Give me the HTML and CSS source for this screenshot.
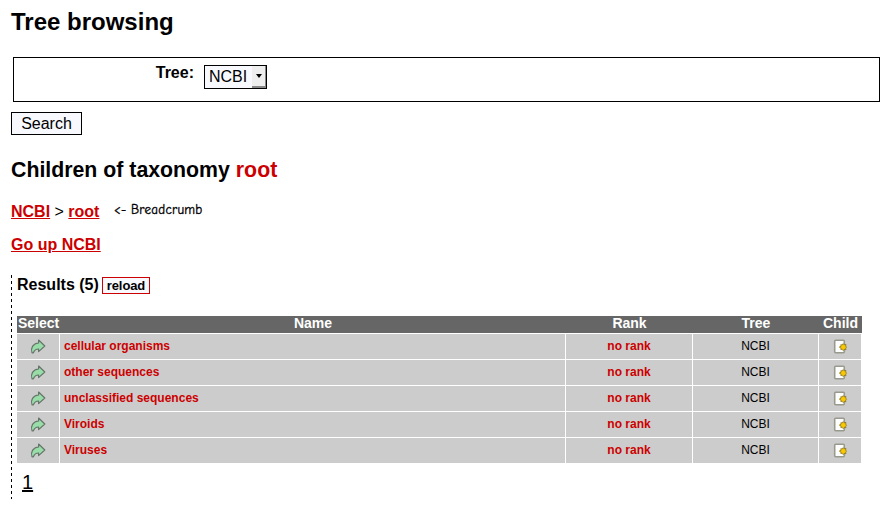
FILE: index.html
```html
<!DOCTYPE html>
<html lang="en">
<head>
<meta charset="utf-8">
<title>Tree browsing</title>
<link rel="stylesheet" href="styles.css">
</head>
<body>
<svg class="defs" aria-hidden="true">
  <symbol id="arrow" viewBox="0 0 16 16">
    <path d="M8.6 2 14.8 8 8.6 13.6V11C6.2 10.9 4.6 11.8 3.4 14.8H2C1.2 12.6 1.3 10.4 2.5 8.4 3.8 6.2 5.8 5.2 8.6 5Z" fill="#98dda8" stroke="#66756a" stroke-width="1.2" stroke-linejoin="round"/>
  </symbol>
  <symbol id="child" viewBox="0 0 16 16">
    <rect x="2.7" y="2.2" width="9.6" height="12.6" rx="1" fill="#fff" stroke="#999a8e" stroke-width="1.6"/>
    <path d="m11.2 5.6 1 1.3 1.8-.5-.4 1.7 1 1-1 1 .4 1.7-1.8-.5-1 1.3-1-1.3-1.4.2.3-1.5-1.8-.9 1.8-.9-.3-1.5 1.4.2Z" fill="#f8c800" stroke="#8e741c" stroke-width=".8"/>
  </symbol>
</svg>
<h1>Tree browsing</h1>
<form>
  <div class="fields">
    <label for="tree">Tree:</label>
    <button type="button" class="select" id="tree"><span>NCBI</span><i class="drop"></i></button>
  </div>
  <button type="button" class="search">Search</button>
</form>
<h2>Children of taxonomy <span class="red">root</span></h2>
<p class="crumbs"><span class="path"><a href="#">NCBI</a> &gt; <a href="#">root</a></span><span class="note">&lt;- Breadcrumb</span></p>
<p class="up"><a href="#">Go up NCBI</a></p>
<section class="results">
  <div class="bar"><h3>Results (5)</h3><button type="button" class="reload">reload</button></div>
  <div class="row head"><div>Select</div><div>Name</div><div>Rank</div><div>Tree</div><div>Child</div></div>
  <div class="row"><div><svg><use href="#arrow"/></svg></div><div class="name">cellular organisms</div><div class="rank">no rank</div><div>NCBI</div><div><svg><use href="#child"/></svg></div></div>
  <div class="row"><div><svg><use href="#arrow"/></svg></div><div class="name">other sequences</div><div class="rank">no rank</div><div>NCBI</div><div><svg><use href="#child"/></svg></div></div>
  <div class="row"><div><svg><use href="#arrow"/></svg></div><div class="name">unclassified sequences</div><div class="rank">no rank</div><div>NCBI</div><div><svg><use href="#child"/></svg></div></div>
  <div class="row"><div><svg><use href="#arrow"/></svg></div><div class="name">Viroids</div><div class="rank">no rank</div><div>NCBI</div><div><svg><use href="#child"/></svg></div></div>
  <div class="row"><div><svg><use href="#arrow"/></svg></div><div class="name">Viruses</div><div class="rank">no rank</div><div>NCBI</div><div><svg><use href="#child"/></svg></div></div>
  <div class="pager"><a href="#">1</a></div>
</section>
</body>
</html>
```
FILE: styles.css
```css
* { box-sizing: border-box; }
body { margin: 0; padding: 8px 7px 0 11px; background: #fff; color: #000; font: 16px/20px "Liberation Sans", Arial, sans-serif; }
.defs { display: none; }
h1, h2, h3, p { margin: 0; }
h1 { height: 49px; font-size: 24px; line-height: 28px; }
button { margin: 0; padding: 0; border: 1px solid #000; border-radius: 0; background: #f8f8ff; color: #000; font: inherit; }
.fields { display: flex; align-items: flex-start; height: 45px; margin-left: 2px; padding-top: 7px; border: 1px solid #000; }
.fields label { width: 180px; margin-right: 10px; line-height: 16px; font-weight: bold; text-align: right; }
.select { display: flex; justify-content: space-between; width: 63px; height: 24px; padding-left: 4px; line-height: 22px; }
.drop { display: flex; align-items: center; justify-content: center; width: 14px; height: 22px; background: #eee; border: solid #888; border-width: 0 1px 2px 0; }
.drop::after { content: ""; border: solid transparent; border-width: 4px 3px 0; border-top-color: #000; }
.search { display: block; width: 71px; height: 23px; margin-top: 10px; line-height: 21px; }
h2 { margin-top: 22px; height: 45px; font-size: 21.3px; line-height: 26px; }
.red, a { color: #c00; }
.crumbs { display: flex; height: 33px; }
.crumbs a, .up a { font-weight: bold; }
.path { width: 103px; white-space: nowrap; }
.note { font: 13px/16px "Comic Sans MS", "Comic Neue", Lato, sans-serif; letter-spacing: 0.27px; -webkit-text-stroke: 0.35px #000; }
.up { height: 40px; }
.results { position: relative; width: 852px; height: 224px; padding-left: 6px; }
.results::before { content: ""; position: absolute; left: 0; top: 0; width: 1px; height: 100%; background: repeating-linear-gradient(#000 0 3px, transparent 3px 6px); }
.bar { display: flex; height: 41px; }
.bar h3 { width: 85px; font-size: 16px; line-height: 20px; white-space: nowrap; }
.reload { width: 48px; height: 17px; margin-top: 2px; border-color: #c00; font-size: 13px; line-height: 15px; font-weight: bold; letter-spacing: -0.1px; }
.row { display: grid; grid-template-columns: 42px 505px 126px 125px 42px; column-gap: 1px; width: 845px; height: 25px; margin-bottom: 1px; font-size: 12px; line-height: 24px; text-align: center; }
.row > div { background: #ccc; }
.row svg { display: block; width: 16px; height: 16px; margin: 4px auto 0; }
.row .name { padding-left: 4px; text-align: left; }
.name, .rank { color: #c00; font-weight: bold; }
.head { height: 17px; background: #666; color: #fff; font-size: 14px; line-height: 15px; font-weight: bold; }
.head > div { background: none; white-space: nowrap; padding-left: 1px; }
.pager { padding: 7px 0 0 5px; font-size: 20px; line-height: 22px; }
.pager a { color: #000; }
```
